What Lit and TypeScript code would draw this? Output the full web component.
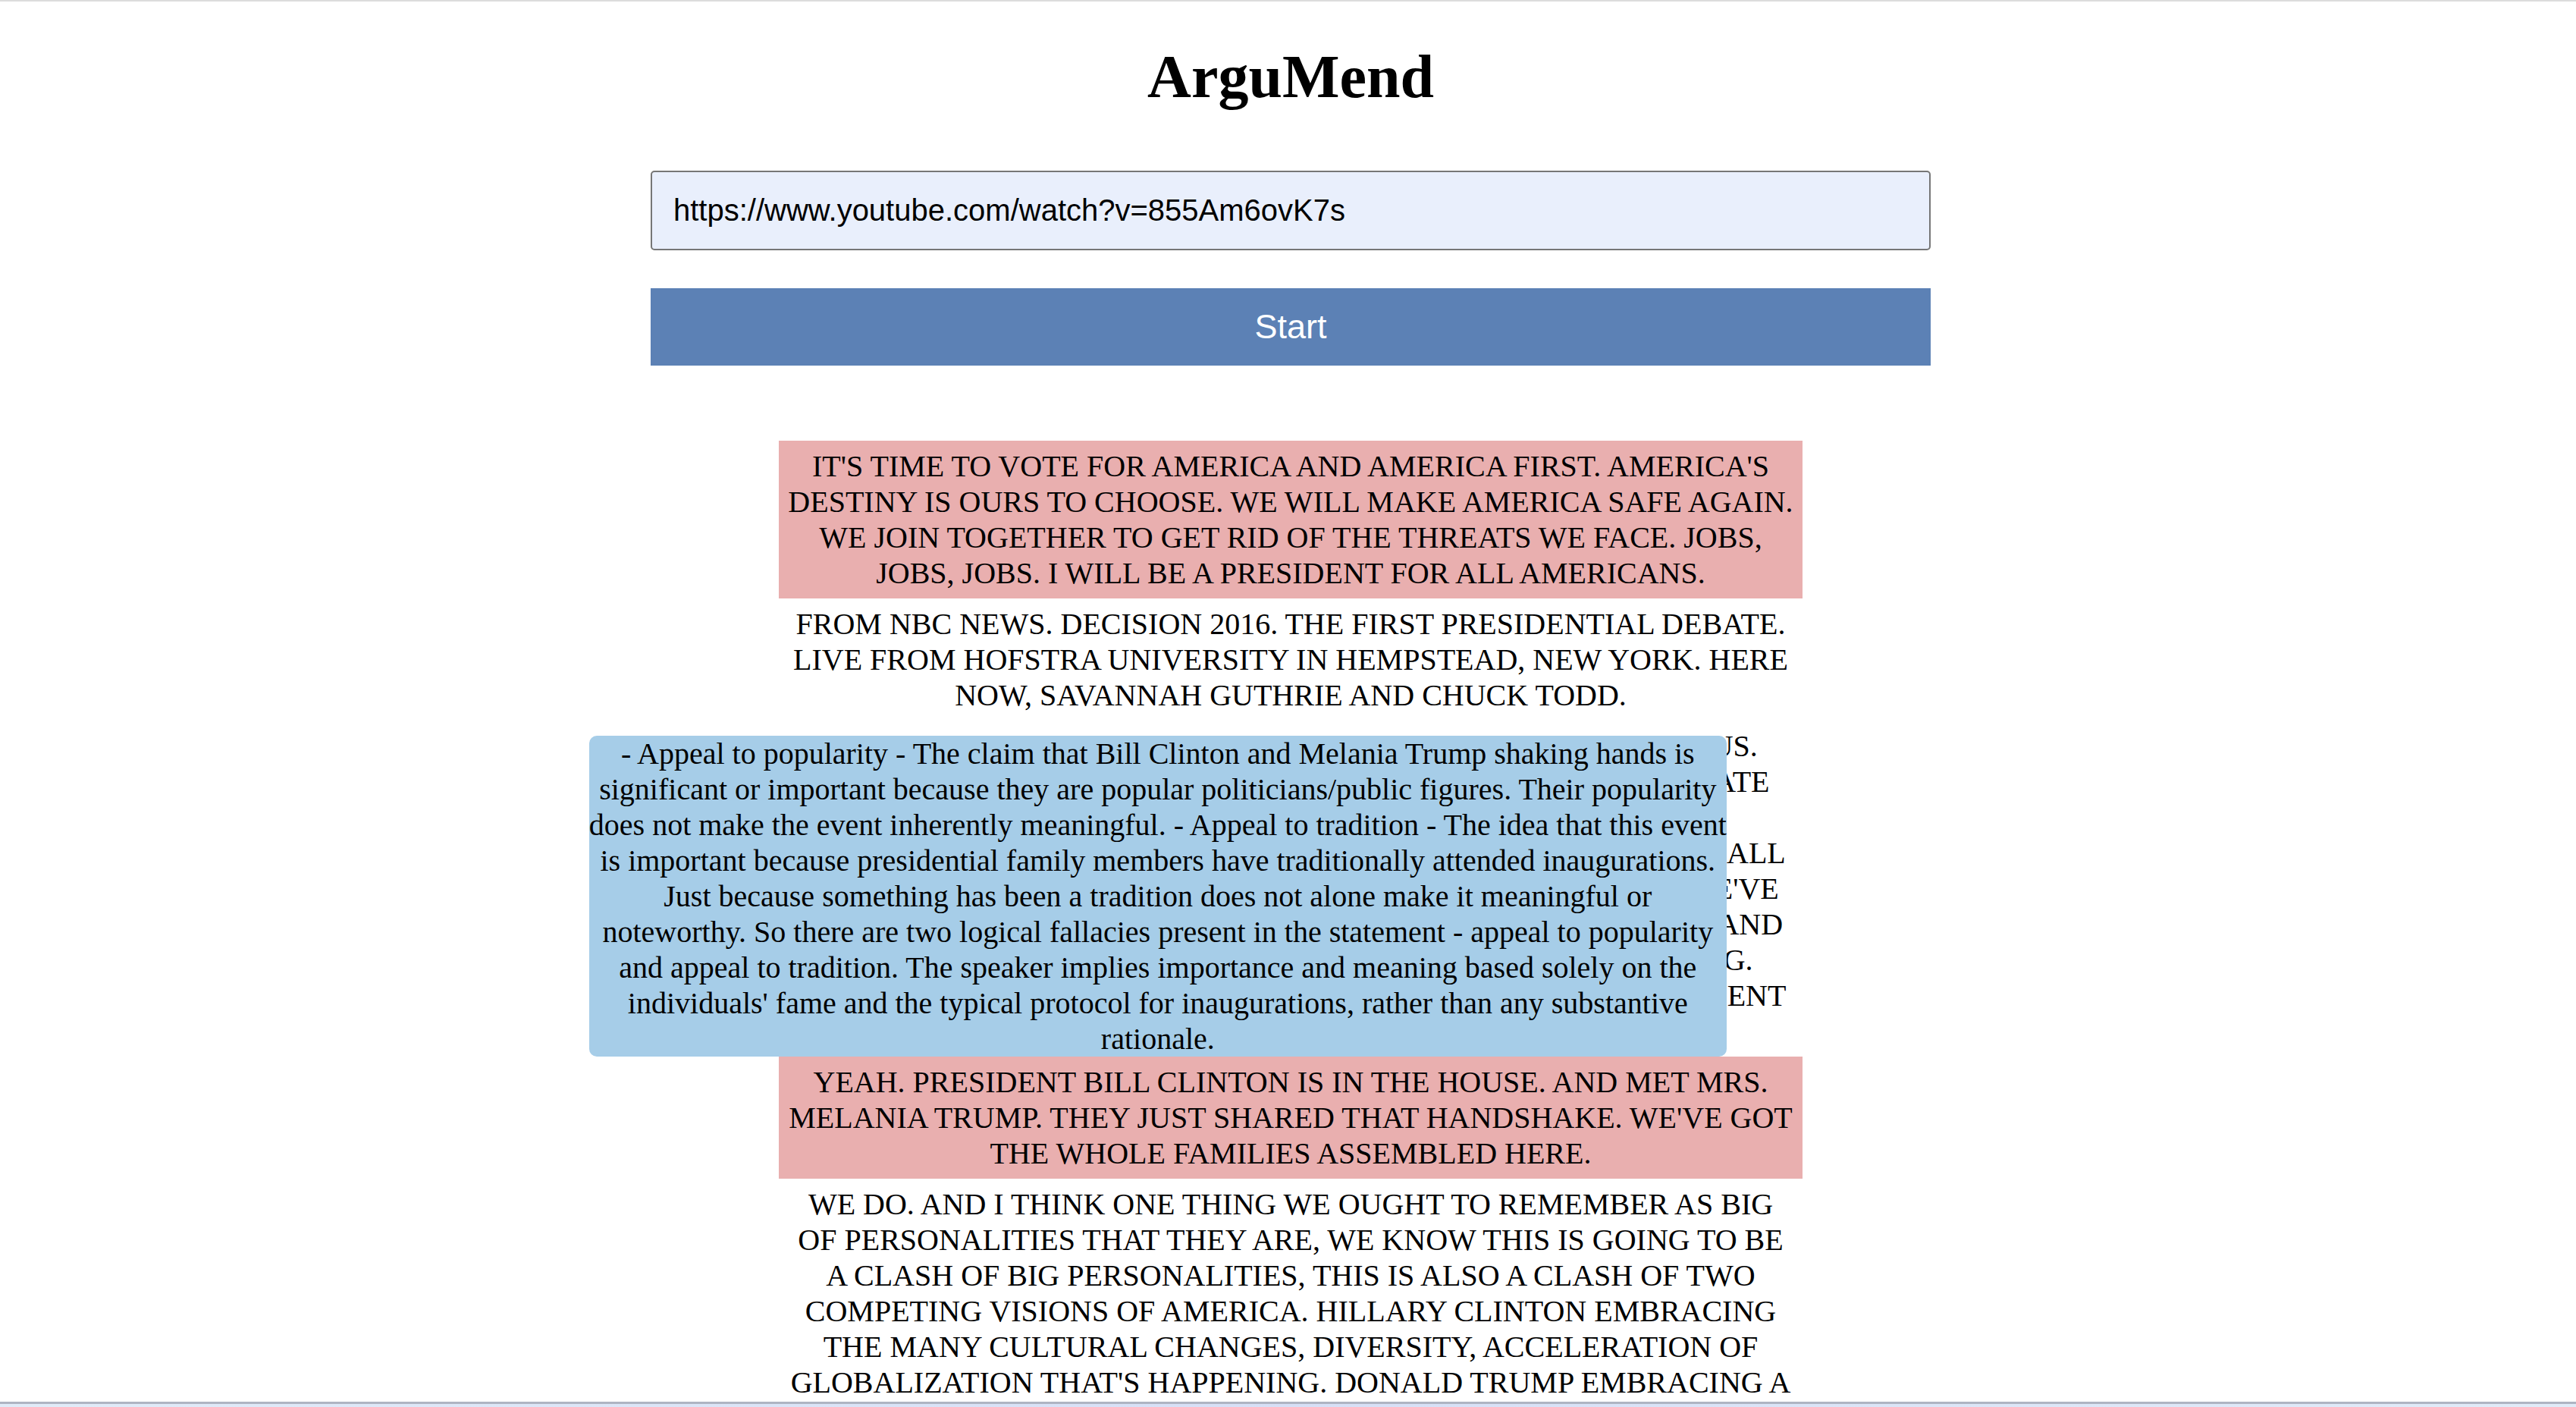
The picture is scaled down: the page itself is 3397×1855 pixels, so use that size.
import { LitElement, html, css } from "lit";
import { customElement, property, state } from "lit/decorators.js";

interface Passage {
  lines: string[];
  fallacy?: string;
  open?: boolean;
}

const passages: Passage[] = [
  {
    lines: [
      "IT'S TIME TO VOTE FOR AMERICA AND AMERICA FIRST. AMERICA'S DESTINY IS OURS TO CHOOSE. WE WILL MAKE AMERICA SAFE AGAIN. WE JOIN TOGETHER TO GET RID OF THE THREATS WE FACE. JOBS, JOBS, JOBS. I WILL BE A PRESIDENT FOR ALL AMERICANS.",
    ],
    fallacy: "",
  },
  {
    lines: [
      "FROM NBC NEWS. DECISION 2016. THE FIRST PRESIDENTIAL DEBATE. LIVE FROM HOFSTRA UNIVERSITY IN HEMPSTEAD, NEW YORK. HERE NOW, SAVANNAH GUTHRIE AND CHUCK TODD.",
    ],
  },
  {
    lines: [
      "GOOD EVENING ALL WELCOME. THANKS FOR STAYING WITH US.",
      "SO THAT HERE IS THE NIGHT OF THE FIRST PRESIDENTIAL DEBATE",
      "WE HAVE ALL BEEN WAITING TO SEE.",
      "THE CANDIDATES ARE THERE IN THE BUILDING, THE SEATS ARE ALL",
      "FILLED AND THE MODERATOR IS READY TO GO. SO TONIGHT WE'VE",
      "GOT A GREAT CROWD OF STUDENTS, THEIR FAMILIES, FRIENDS AND",
      "NEIGHBORS SEATED IN THE HALL FOR THIS VERY BIG EVENING.",
      "BUT SO WE ARE LOOKING FOR THE ARRIVAL OF FORMER PRESIDENT",
      "CLINTON AND THE FAMILIES.",
    ],
  },
  {
    lines: [
      "YEAH. PRESIDENT BILL CLINTON IS IN THE HOUSE. AND MET MRS. MELANIA TRUMP. THEY JUST SHARED THAT HANDSHAKE. WE'VE GOT THE WHOLE FAMILIES ASSEMBLED HERE.",
    ],
    fallacy:
      "- Appeal to popularity - The claim that Bill Clinton and Melania Trump shaking hands is significant or important because they are popular politicians/public figures. Their popularity does not make the event inherently meaningful. - Appeal to tradition - The idea that this event is important because presidential family members have traditionally attended inaugurations. Just because something has been a tradition does not alone make it meaningful or noteworthy. So there are two logical fallacies present in the statement - appeal to popularity and appeal to tradition. The speaker implies importance and meaning based solely on the individuals' fame and the typical protocol for inaugurations, rather than any substantive rationale.",
    open: true,
  },
  {
    lines: [
      "WE DO. AND I THINK ONE THING WE OUGHT TO REMEMBER AS BIG OF PERSONALITIES THAT THEY ARE, WE KNOW THIS IS GOING TO BE A CLASH OF BIG PERSONALITIES, THIS IS ALSO A CLASH OF TWO COMPETING VISIONS OF AMERICA. HILLARY CLINTON EMBRACING THE MANY CULTURAL CHANGES, DIVERSITY, ACCELERATION OF GLOBALIZATION THAT'S HAPPENING. DONALD TRUMP EMBRACING A",
    ],
  },
];

@customElement("transcript-passage")
export class TranscriptPassage extends LitElement {
  @property({ attribute: false }) passage!: Passage;

  static styles = css`
    :host {
      display: block;
    }
    .passage {
      position: relative;
      margin: 0;
      padding: 10px;
    }
    .flagged {
      background: #e9afaf;
    }
    .line {
      display: block;
    }
    .tooltip {
      position: absolute;
      bottom: 100%;
      left: -250px;
      width: 1500px;
      border-radius: 10px;
      background: #a6cde8;
      z-index: 1;
    }
  `;

  render() {
    const { lines, fallacy, open } = this.passage;
    const flagged = fallacy !== undefined;
    return html`<div class="passage ${flagged ? "flagged" : ""}">
      ${lines.map((line) => html`<span class="line">${line}</span>`)}
      ${open ? html`<div class="tooltip" role="tooltip">${fallacy}</div>` : null}
    </div>`;
  }
}

@customElement("app-root")
export class AppRoot extends LitElement {
  @state() private url = "https://www.youtube.com/watch?v=855Am6ovK7s";

  static styles = css`
    :host {
      display: flex;
      flex-direction: column;
      height: 100vh;
      box-sizing: border-box;
      border-top: 2px solid #dcdcdc;
      background: #fff;
      color: #000;
      font: 40px/47px "Liberation Serif", "Times New Roman", serif;
      text-align: center;
    }
    .page {
      flex: 1;
      min-height: 0;
      overflow: hidden;
      display: flex;
      flex-direction: column;
      align-items: center;
      padding: 53px 7px 0 14px;
    }
    .title {
      margin: 0 0 78px;
      font-size: 80px;
      line-height: 92px;
      font-weight: bold;
    }
    .form {
      width: 50%;
      display: flex;
      flex-direction: column;
      gap: 50px;
      margin-bottom: 99px;
    }
    .url {
      box-sizing: border-box;
      width: 100%;
      padding: 28px;
      border: 2px solid #767676;
      border-radius: 5px;
      outline: none;
      background: #e9effc;
      color: #000;
      font: 40px/45px "Liberation Sans", Arial, sans-serif;
      height: 105px;
    }
    .start {
      padding: 25px;
      border: 0;
      background: #5c81b5;
      color: #fff;
      font: 45px/52px "Liberation Sans", Arial, sans-serif;
      cursor: pointer;
    }
    .transcript {
      width: 40%;
      flex-shrink: 0;
    }
    .taskbar {
      flex: none;
      height: 4px;
      border-top: 3px solid #aeb4c2;
      background: linear-gradient(90deg, #e0ebf8, #d6dff6 50%, #e0ebf8);
    }
  `;

  render() {
    return html`
      <main class="page">
        <h1 class="title">ArguMend</h1>
        <form class="form" @submit=${(e: Event) => e.preventDefault()}>
          <input
            class="url"
            type="text"
            aria-label="Video URL"
            .value=${this.url}
            @input=${(e: Event) => (this.url = (e.target as HTMLInputElement).value)}
          />
          <button class="start" type="submit">Start</button>
        </form>
        <section class="transcript">
          ${passages.map((p) => html`<transcript-passage .passage=${p}></transcript-passage>`)}
        </section>
      </main>
      <div class="taskbar"></div>
    `;
  }
}
